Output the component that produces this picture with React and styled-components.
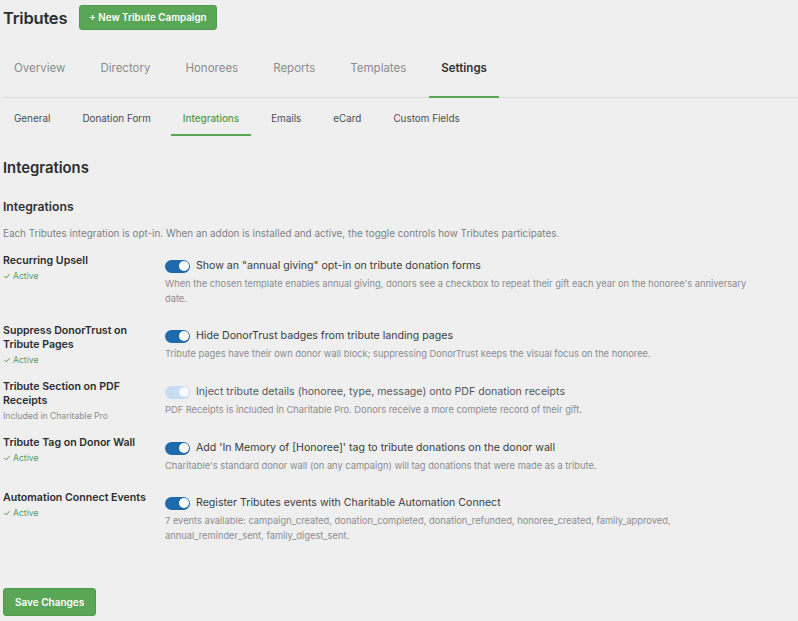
import React from "react";
import styled, { createGlobalStyle } from "styled-components";

const Global = createGlobalStyle`
  html, body { margin: 0; padding: 0; background: #efefef; }
  body { font-family: Inter, "Noto Sans", "Liberation Sans", sans-serif; color: #2f3235; }
  * { box-sizing: border-box; }
`;

const Page = styled.div`
  width: 798px;
  min-height: 621px;
  background: #efefef;
  padding: 5px 0 0 2px;
`;

const Header = styled.div`
  display: flex;
  align-items: center;
  gap: 12px;
  padding-left: 1px;
  height: 25px;
`;

const Title = styled.h1`
  margin: 0;
  font-size: 16.5px;
  font-weight: 600;
  letter-spacing: -0.2px;
  color: #2b2d30;
`;

const GreenButton = styled.button`
  font-family: inherit;
  background: #5aa657;
  color: #fff;
  border: 1px solid #4f9a4c;
  border-radius: 3px;
  font-weight: 600;
  font-size: ${(p) => p.$size || 10}px;
  height: ${(p) => p.$h || 25}px;
  padding: 0 ${(p) => p.$px || 10}px;
  cursor: pointer;
`;

const NavBar = styled.div`
  display: flex;
  gap: 11px;
  margin-top: 8px;
  border-bottom: 1px solid #dadada;
`;

const NavTab = styled.div`
  padding: 22px 12px 20px;
  line-height: 16px;
  font-size: 11.5px;
  font-weight: ${(p) => (p.$active ? 600 : 400)};
  color: ${(p) => (p.$active ? "#2f3235" : "#8c8c8c")};
  border-bottom: 2px solid ${(p) => (p.$active ? "#5aa657" : "transparent")};
  margin-bottom: -1px;
`;

const SubNav = styled.div`
  display: flex;
  gap: 8px;
`;

const SubTab = styled.div`
  padding: 13px 12px 9px;
  line-height: 14px;
  font-size: 9.9px;
  font-weight: ${(p) => (p.$active ? 500 : 400)};
  color: ${(p) => (p.$active ? "#4e9a4c" : "#4a4d50")};
  border-bottom: 2px solid ${(p) => (p.$active ? "#5aa657" : "transparent")};
`;

const Content = styled.div`
  padding-left: 1px;
`;

const H2 = styled.h2`
  margin: 22px 0 0;
  font-size: 14.8px;
  line-height: 20px;
  font-weight: 600;
  color: #2b2d30;
`;

const H3 = styled.h3`
  margin: 21px 0 0;
  font-size: 12.2px;
  line-height: 16px;
  font-weight: 600;
  color: #2f3235;
`;

const Intro = styled.p`
  margin: 11px 0 0;
  font-size: 9.9px;
  line-height: 14px;
  color: #7e8184;
`;

const Rows = styled.div`
  display: flex;
  flex-direction: column;
  gap: 14px;
  margin-top: 14px;
`;

const Row = styled.div`
  display: grid;
  grid-template-columns: 150px 590px;
  column-gap: 12px;
`;

const LabelCol = styled.div`
  display: flex;
  flex-direction: column;
`;

const Label = styled.div`
  font-size: 10.6px;
  line-height: 14px;
  font-weight: 600;
  color: #2b2d30;
`;

const Status = styled.div`
  margin-top: 2px;
  font-size: 8.6px;
  line-height: 12px;
  color: ${(p) => (p.$active ? "#5b9a58" : "#8a8c8e")};
`;

const ControlCol = styled.div`
  padding: 4px 0 4px;
`;

const ToggleLine = styled.label`
  display: flex;
  align-items: center;
  gap: 6px;
  line-height: 16px;
  font-size: 10.6px;
  color: ${(p) => (p.$disabled ? "#55585b" : "#3a3d40")};
`;

const Switch = styled.span`
  position: relative;
  width: 25px;
  height: 13px;
  border-radius: 7px;
  background: ${(p) => (p.$disabled ? "#c8ddf1" : "#1f69ad")};
  flex: none;
  &::after {
    content: "";
    position: absolute;
    right: 1.5px;
    top: 1.5px;
    width: 10px;
    height: 10px;
    border-radius: 50%;
    background: #fff;
    opacity: ${(p) => (p.$disabled ? 0.85 : 1)};
  }
`;

const Desc = styled.p`
  margin: 2px 0 0;
  font-size: 9.3px;
  line-height: 15px;
  color: #8a8c8f;
`;

const SaveWrap = styled.div`
  margin-top: 41px;
`;

const tabs = ["Overview", "Directory", "Honorees", "Reports", "Templates", "Settings"];
const subTabs = ["General", "Donation Form", "Integrations", "Emails", "eCard", "Custom Fields"];

const rows = [
  {
    label: "Recurring Upsell",
    status: "✓ Active",
    active: true,
    toggle: 'Show an "annual giving" opt-in on tribute donation forms',
    desc: "When the chosen template enables annual giving, donors see a checkbox to repeat their gift each year on the honoree's anniversary date.",
  },
  {
    label: "Suppress DonorTrust on Tribute Pages",
    status: "✓ Active",
    active: true,
    toggle: "Hide DonorTrust badges from tribute landing pages",
    desc: "Tribute pages have their own donor wall block; suppressing DonorTrust keeps the visual focus on the honoree.",
  },
  {
    label: "Tribute Section on PDF Receipts",
    status: "Included in Charitable Pro",
    active: false,
    disabled: true,
    toggle: "Inject tribute details (honoree, type, message) onto PDF donation receipts",
    desc: "PDF Receipts is included in Charitable Pro. Donors receive a more complete record of their gift.",
  },
  {
    label: "Tribute Tag on Donor Wall",
    status: "✓ Active",
    active: true,
    toggle: "Add 'In Memory of [Honoree]' tag to tribute donations on the donor wall",
    desc: "Charitable's standard donor wall (on any campaign) will tag donations that were made as a tribute.",
  },
  {
    label: "Automation Connect Events",
    status: "✓ Active",
    active: true,
    toggle: "Register Tributes events with Charitable Automation Connect",
    desc: "7 events available: campaign_created, donation_completed, donation_refunded, honoree_created, family_approved, annual_reminder_sent, family_digest_sent.",
  },
];

export default function App() {
  return (
    <Page>
      <Global />
      <Header>
        <Title>Tributes</Title>
        <GreenButton $h={25} $px={9} $size={9.8}>+ New Tribute Campaign</GreenButton>
      </Header>
      <NavBar>
        {tabs.map((t) => (
          <NavTab key={t} $active={t === "Settings"}>{t}</NavTab>
        ))}
      </NavBar>
      <SubNav>
        {subTabs.map((t) => (
          <SubTab key={t} $active={t === "Integrations"}>{t}</SubTab>
        ))}
      </SubNav>
      <Content>
        <H2>Integrations</H2>
        <H3>Integrations</H3>
        <Intro>
          Each Tributes integration is opt-in. When an addon is installed and active, the toggle controls how Tributes participates.
        </Intro>
        <Rows>
          {rows.map((r) => (
            <Row key={r.toggle}>
              <LabelCol>
                <Label>{r.label}</Label>
                <Status $active={r.active}>{r.status}</Status>
              </LabelCol>
              <ControlCol>
                <ToggleLine $disabled={r.disabled}>
                  <Switch $disabled={r.disabled} />
                  {r.toggle}
                </ToggleLine>
                <Desc>{r.desc}</Desc>
              </ControlCol>
            </Row>
          ))}
        </Rows>
        <SaveWrap>
          <GreenButton $h={28} $px={11} $size={10}>Save Changes</GreenButton>
        </SaveWrap>
      </Content>
    </Page>
  );
}
